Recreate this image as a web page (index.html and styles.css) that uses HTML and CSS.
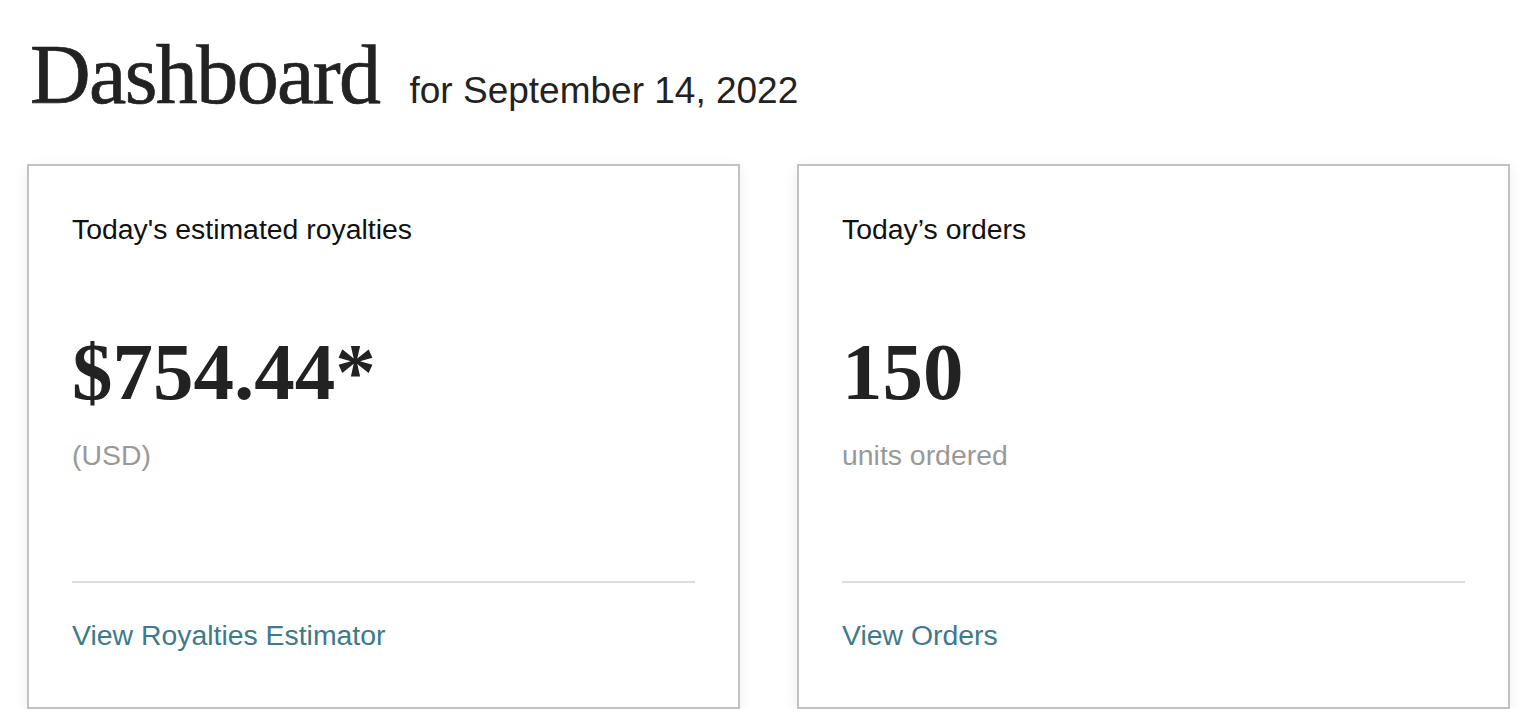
FILE: index.html
```html
<!DOCTYPE html>
<html lang="en">
<head>
<meta charset="utf-8">
<title>Dashboard</title>
<link rel="stylesheet" href="styles.css">
</head>
<body>
<main class="page">
  <header class="page-header">
    <h1 class="page-title">Dashboard</h1>
    <span class="page-date">for September 14, 2022</span>
  </header>
  <section class="cards">
    <article class="card">
      <h2 class="card-title">Today's estimated royalties</h2>
      <div class="card-value">$754.44*</div>
      <div class="card-unit">(USD)</div>
      <hr class="card-divider">
      <a class="card-link" href="#">View Royalties Estimator</a>
    </article>
    <article class="card">
      <h2 class="card-title">Today’s orders</h2>
      <div class="card-value">150</div>
      <div class="card-unit">units ordered</div>
      <hr class="card-divider">
      <a class="card-link" href="#">View Orders</a>
    </article>
  </section>
</main>
</body>
</html>
```
FILE: styles.css
```css
html, body {
  margin: 0;
  padding: 0;
  background: #ffffff;
}
body {
  font-family: "Liberation Sans", Arial, sans-serif;
  color: #111111;
}
.page {
  padding: 33px 0 0 27px;
}
.page-header {
  display: flex;
  align-items: baseline;
  height: 84px;
}
.page-title {
  margin: 0;
  font-family: "Liberation Serif", "Times New Roman", serif;
  font-weight: normal;
  font-size: 84px;
  line-height: 84px;
  letter-spacing: -1.6px;
  color: #222222;
  padding-left: 3px;
  -webkit-text-stroke: 0.7px #222222;
}
.page-date {
  margin-left: 30px;
  font-size: 37px;
  color: #222222;
}
.cards {
  display: grid;
  grid-template-columns: 713px 713px;
  column-gap: 57px;
  margin-top: 47px;
}
.card {
  display: flex;
  flex-direction: column;
  box-sizing: border-box;
  height: 545px;
  border: 2px solid #c2c2c2;
  background: #ffffff;
  box-shadow: 0 4px 14px rgba(0, 0, 0, 0.07);
  padding: 47px 43px 0 43px;
}
.card-title {
  margin: 0;
  font-size: 28.4px;
  font-weight: normal;
  line-height: 32px;
  color: #111111;
}
.card-value {
  margin-top: 87px;
  font-family: "Liberation Serif", "Times New Roman", serif;
  font-weight: bold;
  font-size: 81px;
  line-height: 80px;
  color: #222222;
}
.card-unit {
  margin-top: 27px;
  font-size: 28.4px;
  line-height: 32px;
  color: #999999;
}
.card-divider {
  margin: 110px 0 0 0;
  border: 0;
  height: 2px;
  background: #dddddd;
}
.card-link {
  margin-top: 36px;
  font-size: 28.4px;
  line-height: 32px;
  color: #3d7a8a;
  text-decoration: none;
}
```
